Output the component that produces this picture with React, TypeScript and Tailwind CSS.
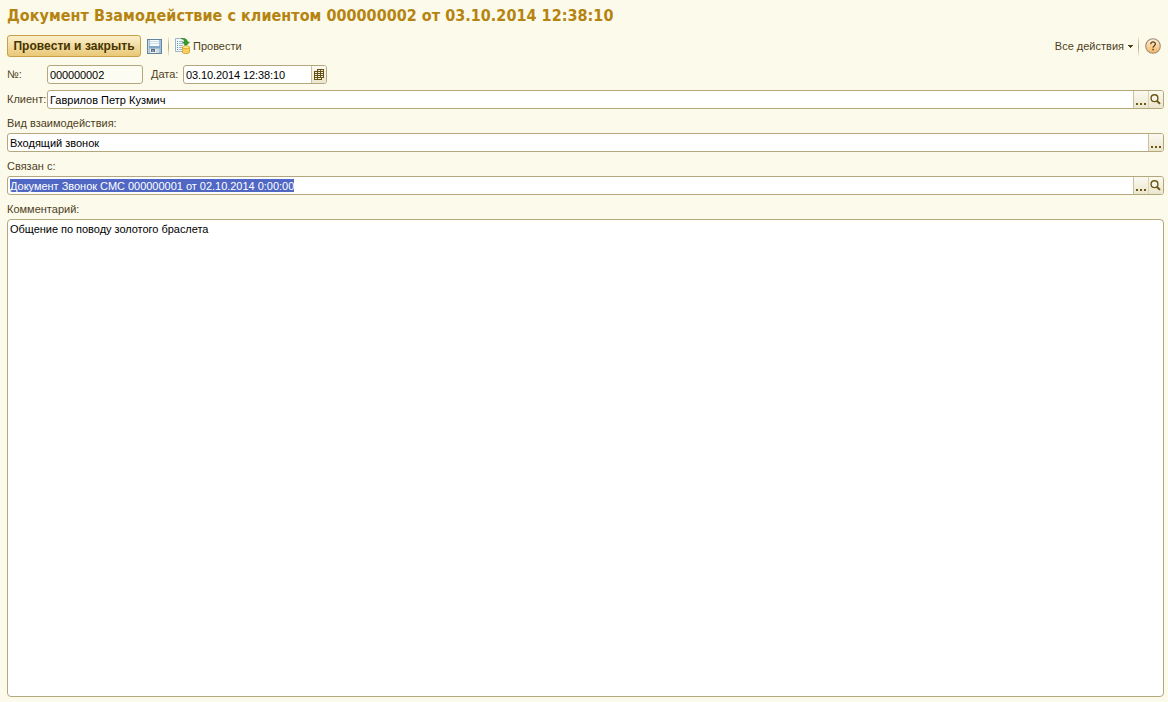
import type { ReactNode } from "react";

// ── Icons ────────────────────────────────────────────────────────────────────
function SaveIcon() {
  return (
    <svg width="15" height="15" viewBox="0 0 15 15" shapeRendering="crispEdges">
      <rect x="0.5" y="0.5" width="14" height="14" fill="#a3c0d9" stroke="#64849c" />
      <rect x="1" y="1" width="1" height="13" fill="#c3d7e7" />
      <rect x="3" y="1" width="9" height="6" fill="#f5fafc" />
      <rect x="3" y="2" width="9" height="1" fill="#cfdde6" />
      <rect x="3" y="4" width="9" height="1" fill="#cfdde6" />
      <rect x="2" y="7" width="11" height="2" fill="#82a7c7" />
      <rect x="3" y="10" width="9" height="4" fill="#eef2f4" />
      <rect x="4" y="10" width="4" height="3" fill="#5b6c79" />
      <rect x="5" y="11" width="2" height="2" fill="#8b9aa5" />
      <rect x="9" y="10" width="3" height="4" fill="#d3dce2" />
    </svg>
  );
}

function PostIcon() {
  return (
    <svg width="16" height="16" viewBox="0 0 16 16">
      <path d="M0.5 0.5h9v13h-9z" fill="#f3f8fb" stroke="#9db5c4" />
      <path d="M2 3.5h1M2 5.5h1M2 7.5h1M2 9.5h1M2 11.5h1" stroke="#5f88a5" />
      <path d="M4 3.5h4M4 5.5h4M4 7.5h4M4 9.5h3M4 11.5h3" stroke="#a3bac9" />
      <path d="M6 0.500c4-0.500 6.300 0.500 6.500 3.500h2l-3.500 4-3.500-4h2.200c0-1.500-1-2.500-3.700-3.500z" fill="#359d2b" stroke="#1c7817" strokeWidth="0.500" />
      <path d="M7.500 9v5c0 2 7 2 7 0V9z" fill="#f2b72c" stroke="#cf951d" strokeWidth="0.800" />
      <ellipse cx="11" cy="9.200" rx="3.500" ry="1.400" fill="#ffea8c" stroke="#daa427" strokeWidth="0.700" />
      <path d="M7.800 11.300c1 1.300 5.400 1.300 6.400 0M7.800 13.300c1 1.300 5.400 1.300 6.400 0" fill="none" stroke="#fff0a0" strokeWidth="0.900" />
    </svg>
  );
}

function CalendarIcon() {
  return (
    <svg width="10" height="11" viewBox="0 0 10 11" shapeRendering="crispEdges">
      <path d="M3 0h7v9H8v2H0V2h3z" fill="#665217" />
      <path
        d="M4 1h2v1H4zM7 1h2v1H7zM1 3h2v1H1zM4 3h2v1H4zM7 3h2v1H7zM1 5h2v1H1zM4 5h2v1H4zM7 5h2v1H7zM1 7h2v1H1zM4 7h2v1H4zM7 7h2v1H7zM1 9h2v1H1zM4 9h3v1H4z"
        fill="#f3efda"
      />
    </svg>
  );
}

function SearchIcon() {
  return (
    <svg width="11" height="11" viewBox="0 0 11 11">
      <circle cx="4.500" cy="4.200" r="3.400" fill="#faf7e6" stroke="#6b5718" strokeWidth="1.400" />
      <path d="M6.800 6.700l3.200 3.200" stroke="#6b5718" strokeWidth="2" />
    </svg>
  );
}

function DotsIcon() {
  return (
    <svg width="10" height="2" viewBox="0 0 10 2" shapeRendering="crispEdges">
      <path d="M0 0h2v2H0zM4 0h2v2H4zM8 0h2v2H8z" fill="#6b5718" />
    </svg>
  );
}

function HelpIcon() {
  return (
    <svg width="16" height="16" viewBox="0 0 16 16">
      <defs>
        <linearGradient id="help" x1="0" y1="0" x2="0" y2="1">
          <stop offset="0" stopColor="#fff3df" />
          <stop offset="0.500" stopColor="#fbd39b" />
          <stop offset="1" stopColor="#f5b562" />
        </linearGradient>
      </defs>
      <circle cx="8" cy="8" r="7.300" fill="url(#help)" stroke="#a08c78" strokeWidth="1.100" />
      <path d="M5.700 6.200c0-3.200 4.800-3 4.700-0.200c0 1.700-2.300 1.700-2.300 3.700" fill="none" stroke="#594329" strokeWidth="1.300" />
      <rect x="7.300" y="10.800" width="1.500" height="1.500" fill="#594329" />
    </svg>
  );
}

// ── Building blocks ──────────────────────────────────────────────────────────
function Separator() {
  return <div className="h-[19px] w-px bg-linear-to-b from-[#f3eed8] via-[#b5a878] to-[#f3eed8]" />;
}

function Field({ className = "", children, buttons }: { className?: string; children: ReactNode; buttons?: ReactNode }) {
  return (
    <div className={`flex h-[19px] overflow-hidden rounded-[3px] border border-[#b3a77d] text-black ${className}`}>
      <div className="flex-1 pl-[2px] leading-[18px]">{children}</div>
      {buttons}
    </div>
  );
}

function PickButton() {
  return (
    <button className="flex w-[15px] items-end justify-center border-l border-[#c9c0a0] bg-linear-to-b from-[#fcfaf0] to-[#ebe6ce] pb-[3px]">
      <DotsIcon />
    </button>
  );
}

function SearchButton() {
  return (
    <button className="flex w-[15px] border-l border-[#d9d2b8] bg-linear-to-b from-[#fcfaf0] to-[#ebe6ce] pt-[3px] pl-[1px]">
      <SearchIcon />
    </button>
  );
}

export default function App() {
  return (
    <div className="flex h-[702px] w-[1168px] flex-col overflow-hidden bg-[#fcfaeb] pr-1 pl-[7px] font-['Liberation_Sans',Arial,sans-serif] text-[11px] whitespace-nowrap text-[#4d3f1c]">
      <h1 className="h-[35px] pt-[4px] font-['DejaVu_Sans_Condensed','DejaVu_Sans',sans-serif] text-[16px] leading-[23px] font-bold tracking-[0.03px] text-[#b58410]">
        Документ Взамодействие с клиентом 000000002 от 03.10.2014 12:38:10
      </h1>

      {/* Command bar */}
      <div className="flex h-[22px] items-center">
        <button className="h-[22px] w-[134px] rounded-[3px] border border-[#c99f48] bg-linear-to-b from-[#fbefcb] to-[#e9c877] text-[12px] font-bold text-[#463400]">
          <span className="tracking-[0.05px]">Провести и закрыть</span>
        </button>
        <button className="ml-[6px]">
          <SaveIcon />
        </button>
        <div className="ml-[6px]">
          <Separator />
        </div>
        <button className="ml-[6px] flex items-center gap-[2px]">
          <PostIcon />
          <span>Провести</span>
        </button>
        <button className="ml-auto flex items-center gap-[4px]">
          <span>Все действия</span>
          <svg width="5" height="3" viewBox="0 0 5 3" shapeRendering="crispEdges">
            <path d="M0 0h5v1H0zM1 1h3v1H1zM2 2h1v1H2z" fill="#4d3f1c" />
          </svg>
        </button>
        <div className="ml-[5px]">
          <Separator />
        </div>
        <button className="mr-[3px] ml-[6px]">
          <HelpIcon />
        </button>
      </div>

      {/* Number and date */}
      <div className="mt-[8px] flex h-[19px] leading-[19px]">
        <label className="w-[40px]">№:</label>
        <Field className="w-[96px] bg-[#fdfcf3] tracking-[-0.1px]">000000002</Field>
        <label className="ml-[8px] w-[32px]">Дата:</label>
        <Field
          className="w-[144px] bg-white tracking-[-0.1px]"
          buttons={
            <button className="flex w-[15px] border-l border-[#c9c0a0] bg-linear-to-b from-[#fcfaf0] to-[#ebe6ce] pt-[3px] pl-[2px]">
              <CalendarIcon />
            </button>
          }
        >
          03.10.2014 12:38:10
        </Field>
      </div>

      {/* Client */}
      <div className="mt-[6px] flex h-[19px] leading-[19px]">
        <label className="w-[40px]">Клиент:</label>
        <Field className="flex-1 bg-white" buttons={<><PickButton /><SearchButton /></>}>
          Гаврилов Петр Кузмич
        </Field>
      </div>

      <label className="mt-[5px] h-[19px] leading-[19px]">Вид взаимодействия:</label>
      <Field className="bg-white" buttons={<PickButton />}>Входящий звонок</Field>

      <label className="mt-[5px] h-[19px] leading-[19px]">Связан с:</label>
      <Field className="bg-white" buttons={<><PickButton /><SearchButton /></>}>
        <span className="inline-block h-[13px] bg-[#5068c4] leading-[14px] tracking-[-0.02px] text-white">
          Документ Звонок СМС 000000001 от 02.10.2014 0:00:00
        </span>
      </Field>

      <label className="mt-[5px] h-[19px] leading-[19px]">Комментарий:</label>
      <div className="h-[478px] rounded-[4px] border border-[#b3a77d] bg-white pt-[2px] pl-[2px] leading-[14px] tracking-[-0.03px] text-black">
        Общение по поводу золотого браслета
      </div>
    </div>
  );
}
